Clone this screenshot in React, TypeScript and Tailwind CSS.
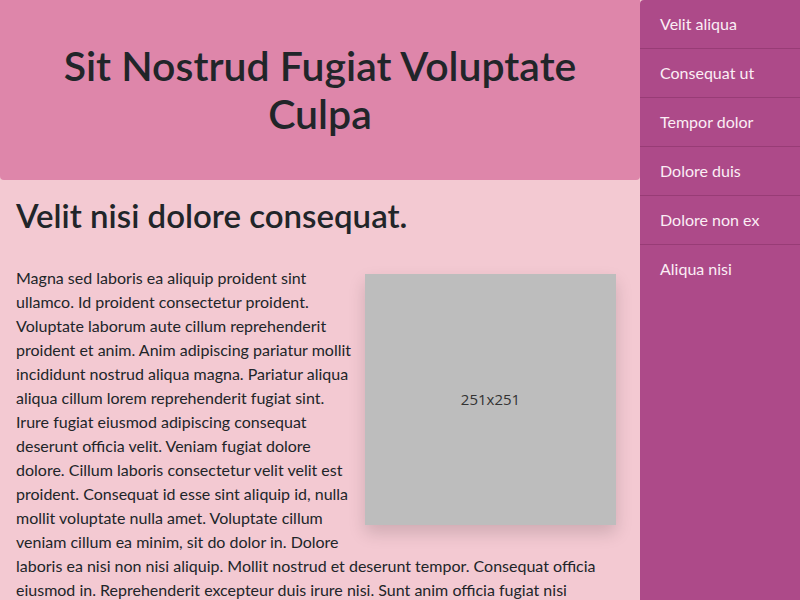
export default function App() {
  const links = ['Velit aliqua', 'Consequat ut', 'Tempor dolor', 'Dolore duis', 'Dolore non ex', 'Aliqua nisi'];

  return (
    <div className="flex min-h-[600px] h-[600px] overflow-hidden bg-[#f3c9d2] text-[#212529] font-['Lato',sans-serif]">
      <main className="w-[640px] shrink-0">
        <header className="h-[180px] bg-[#de86aa] rounded-b-[4px] flex items-center justify-center px-12">
          <h1 className="text-[41px] leading-[48px] font-semibold text-center">Sit Nostrud Fugiat Voluptate Culpa</h1>
        </header>
        <section className="px-4 pt-4">
          <h2 className="text-[33px] leading-[38px] font-semibold mb-8">Velit nisi dolore consequat.</h2>
          <div className="float-right m-2 w-[251px] h-[251px] bg-[#bdbdbd] shadow-[0_8px_16px_rgba(0,0,0,0.15)] flex items-center justify-center text-[15px] text-[#333] font-['Open_Sans',sans-serif]">
            251x251
          </div>
          <p className="text-base leading-6">
            Magna sed laboris ea aliquip proident sint ullamco. Id proident consectetur proident. Voluptate laborum aute
            cillum reprehenderit proident et anim. Anim adipiscing pariatur mollit incididunt nostrud aliqua magna.
            Pariatur aliqua aliqua cillum lorem reprehenderit fugiat sint. Irure fugiat eiusmod adipiscing consequat
            deserunt officia velit. Veniam fugiat dolore dolore. Cillum laboris consectetur velit velit est proident.
            Consequat id esse sint aliquip id, nulla mollit voluptate nulla amet. Voluptate cillum veniam cillum ea minim,
            sit do dolor in. Dolore laboris ea nisi non nisi aliquip. Mollit nostrud et deserunt tempor. Consequat officia
            eiusmod in. Reprehenderit excepteur duis irure nisi. Sunt anim officia fugiat nisi ullamco. Lorem tempor sint
            cupidatat aute amet. Do velit dolore ipsum adipiscing.
          </p>
        </section>
      </main>
      <aside className="w-[160px] shrink-0 bg-[#ad4a89] rounded-tl-[4px]">
        <nav className="flex flex-col">
          {links.map((l, i) => (
            <a
              key={l}
              href="#"
              className={`px-5 py-3 text-base leading-6 text-[#fbeef5] ${i < links.length - 1 ? 'border-b border-[#983c76]' : ''}`}
            >
              {l}
            </a>
          ))}
        </nav>
      </aside>
    </div>
  );
}
